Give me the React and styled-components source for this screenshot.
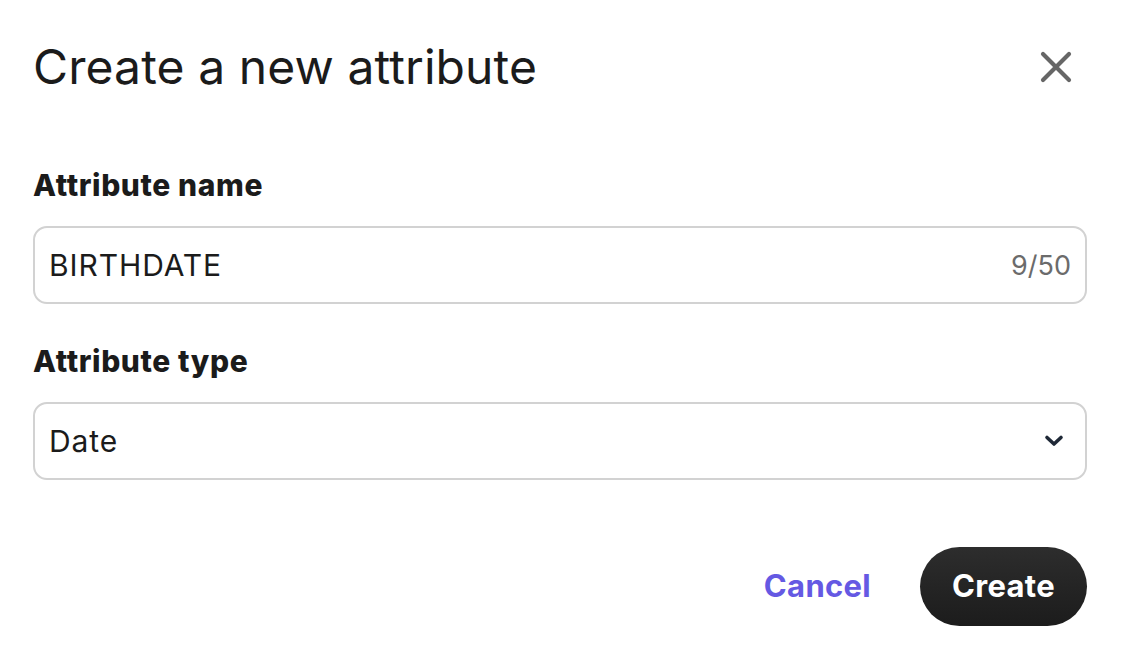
import React from 'react';
import styled, {createGlobalStyle} from 'styled-components';

const GlobalStyle = createGlobalStyle`
    html, body {
        margin: 0;
        padding: 0;
        background: #fff;
    }
    body {
        font-family: Inter, "Noto Sans", "Liberation Sans", sans-serif;
        color: #1b1b1b;
    }
    * {
        box-sizing: border-box;
    }
`

const StyledDialog = styled.section`
    width: 1126px;
    padding: 38px 39px 0 33px;
    display: flex;
    flex-direction: column;
`

const StyledHeader = styled.header`
    display: flex;
    align-items: center;
    justify-content: space-between;
    height: 58px;
`

const StyledTitle = styled.h2`
    margin: 0;
    font-size: 48px;
    line-height: 58px;
    font-weight: 400;
    letter-spacing: 0.1px;
    color: #1b1b1b;
`

const CloseButton = styled.button`
    width: 44px;
    height: 44px;
    margin-right: 9px;
    border: none;
    background: transparent;
    padding: 0;
    display: flex;
    align-items: center;
    justify-content: center;
    cursor: pointer;
`

const StyledField = styled.div`
    display: flex;
    flex-direction: column;
    margin-top: ${({top}) => top}px;
`

const StyledLabel = styled.label`
    font-size: 30px;
    line-height: 34px;
    font-weight: 800;
    letter-spacing: 0.6px;
    color: #1b1b1b;
    margin-bottom: 24px;
`

const StyledBox = styled.div`
    height: 78px;
    border: 2px solid #d2d2d2;
    border-radius: 14px;
    display: flex;
    align-items: center;
    justify-content: space-between;
    padding: 0 ${({padRight}) => padRight}px 0 14px;
    color: #1b1b1b;
`

const StyledValue = styled.span`
    font-size: 30px;
    letter-spacing: 0.9px;
`

const StyledCounter = styled.span`
    font-size: 27px;
    color: #6b6b6b;
`

const StyledActions = styled.footer`
    display: flex;
    justify-content: flex-end;
    align-items: center;
    gap: 49px;
    margin-top: 67px;
`

const CancelButton = styled.button`
    border: none;
    background: transparent;
    padding: 0 0 3px;
    font-family: inherit;
    font-size: 31px;
    font-weight: 700;
    letter-spacing: 0.3px;
    color: #6559e3;
    cursor: pointer;
`

const CreateButton = styled.button`
    width: 167px;
    height: 79px;
    border: none;
    border-radius: 40px;
    padding: 0 0 2px;
    background: linear-gradient(180deg, #2d2d2d 0%, #1c1c1c 100%);
    color: #fff;
    font-family: inherit;
    font-size: 31px;
    font-weight: 700;
    letter-spacing: 0.3px;
    cursor: pointer;
`

const CloseIcon = () => (
    <svg width="32" height="32" viewBox="0 0 32 32">
        <path d="M3 3 L29 29 M29 3 L3 29" stroke="#666" strokeWidth="4.2" strokeLinecap="round" />
    </svg>
)

const ChevronIcon = () => (
    <svg width="20" height="14" viewBox="0 0 20 14">
        <path d="M3 3.5 L10 10 L17 3.5" fill="none" stroke="#1f2937" strokeWidth="3.6" strokeLinecap="round" strokeLinejoin="round" />
    </svg>
)

const App = () => (
    <>
        <GlobalStyle />
        <StyledDialog>
            <StyledHeader>
                <StyledTitle>Create a new attribute</StyledTitle>
                <CloseButton aria-label="Close"><CloseIcon /></CloseButton>
            </StyledHeader>
            <StyledField top={72}>
                <StyledLabel>Attribute name</StyledLabel>
                <StyledBox padRight={14}>
                    <StyledValue>BIRTHDATE</StyledValue>
                    <StyledCounter>9/50</StyledCounter>
                </StyledBox>
            </StyledField>
            <StyledField top={40}>
                <StyledLabel>Attribute type</StyledLabel>
                <StyledBox padRight={21}>
                    <StyledValue>Date</StyledValue>
                    <ChevronIcon />
                </StyledBox>
            </StyledField>
            <StyledActions>
                <CancelButton>Cancel</CancelButton>
                <CreateButton>Create</CreateButton>
            </StyledActions>
        </StyledDialog>
    </>
)

export default App
